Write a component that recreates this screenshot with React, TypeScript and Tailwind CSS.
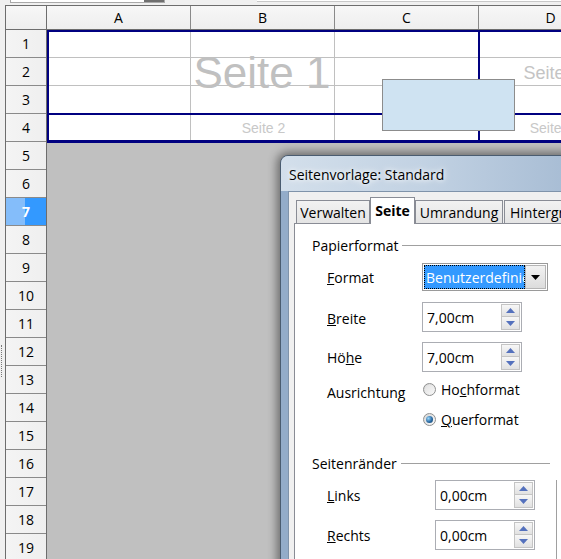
import React from "react";

const NAVY = "border-[#000080]";

function UpTri() {
  return (
    <svg width="9" height="5" viewBox="0 0 9 5">
      <polygon points="0,5 4.5,0 9,5" fill="#5471bd" />
    </svg>
  );
}
function DownTri() {
  return (
    <svg width="9" height="5" viewBox="0 0 9 5">
      <polygon points="0,0 9,0 4.5,5" fill="#5471bd" />
    </svg>
  );
}

function SpinField({ value }: { value: string }) {
  return (
    <div className="w-[100px] h-[30px] border border-[#abadb3] bg-white flex items-center pl-[4px] pr-[1px]">
      <span className="flex-1">{value}</span>
      <div className="flex flex-col w-[19px] h-[26px]">
        <div className="h-[13px] border border-[#c4c4c4] bg-[linear-gradient(to_bottom,#f7f7f7,#e1e1e1)] flex items-center justify-center">
          <UpTri />
        </div>
        <div className="h-[13px] border border-t-0 border-[#c4c4c4] bg-[linear-gradient(to_bottom,#f7f7f7,#e1e1e1)] flex items-center justify-center">
          <DownTri />
        </div>
      </div>
    </div>
  );
}

function Radio({ checked }: { checked?: boolean }) {
  return (
    <div className="w-[13px] h-[13px] rounded-full border border-[#8e8f8f] bg-[linear-gradient(135deg,#d6d6d6,#fbfbfb)] flex items-center justify-center shrink-0">
      {checked ? (
        <div className="w-[7px] h-[7px] rounded-full bg-[radial-gradient(circle_at_35%_35%,#9ad7fb,#2a6aa3_55%,#0f3e66)]" />
      ) : (
        <div className="w-[9px] h-[9px] rounded-full bg-[linear-gradient(135deg,#e2e2e2,#f6f6f6)]" />
      )}
    </div>
  );
}

function PageCells({ rows, cols }: { rows: string; cols: string }) {
  const nRows = rows === "top" ? 3 : 1;
  const nCols = cols === "abc" ? 3 : 1;
  const cells = [];
  for (let r = 0; r < nRows; r++) {
    for (let c = 0; c < nCols; c++) {
      const right = c < nCols - 1 ? "border-r border-[#c0c0c0]" : "";
      const bottom = r < nRows - 1 ? "border-b border-[#c0c0c0]" : "";
      cells.push(<div key={`${r}-${c}`} className={`bg-white ${right} ${bottom}`} />);
    }
  }
  return <>{cells}</>;
}

export default function App() {
  const rows = Array.from({ length: 19 }, (_, i) => i + 1);
  return (
    <div className="relative w-[561px] h-[559px] overflow-hidden bg-[#f0f0f0] font-['Open_Sans',sans-serif] text-[14px] text-black">
      {/* toolbar remnant */}
      <div className="flex items-start h-[5px]">
        <div className="ml-[10px] w-[155px] h-[3px] border-x border-b border-[#a9a9a9] bg-white flex justify-end">
          <div className="w-[20px] h-[2px] bg-[#6f6f6f]" />
        </div>
        <div className="ml-[92px] flex-1 h-[2px] border-b border-[#c8c8c8] bg-white" />
      </div>

      <div className="flex">
        {/* left ruler strip */}
        <div className="w-[5px] shrink-0">
          <div className="mt-[340px] ml-[1px] h-[32px] w-[3px] border-l border-dotted border-[#777]" />
        </div>

        {/* sheet */}
        <div className="flex-1 border-l border-t border-[#6d6d6d] flex flex-col">
          {/* column headers */}
          <div className="flex h-[24px] border-b border-[#6d6d6d] bg-[linear-gradient(to_bottom,#f7f7f7,#eeeeee)]">
            <div className="w-[41px] shrink-0 border-r border-[#6d6d6d]" />
            {["A", "B", "C", "D"].map((c) => (
              <div key={c} className="w-[144px] shrink-0 border-r border-[#8a8a8a] flex items-center justify-center">
                {c}
              </div>
            ))}
          </div>

          <div className="flex">
            {/* row headers */}
            <div className="w-[41px] shrink-0 border-r border-[#6d6d6d] flex flex-col">
              {rows.map((r) =>
                r === 7 ? (
                  <div
                    key={r}
                    className="h-[28px] shrink-0 border-b border-[#8a8a8a] bg-[linear-gradient(to_right,#84bdfa_19px,#3399ff_19px)] text-white font-bold flex items-center justify-center"
                  >
                    {r}
                  </div>
                ) : (
                  <div
                    key={r}
                    className="h-[28px] shrink-0 border-b border-[#8a8a8a] bg-[linear-gradient(to_right,#f4f4f4,#efefef)] flex items-center justify-center"
                  >
                    {r}
                  </div>
                )
              )}
            </div>

            {/* cell area */}
            <div className="relative flex-1 bg-[#c0c0c0]">
              <div className="w-[576px] font-['Liberation_Sans',Arial,sans-serif]">
                <div className={`border-t-2 border-l-2 ${NAVY}`}>
                  <div className={`flex h-[83px] border-b-2 ${NAVY}`}>
                    <div className={`relative w-[431px] shrink-0 border-r-2 ${NAVY} grid grid-cols-[142px_144px_143px] grid-rows-[26px_28px_27px]`}>
                      <PageCells rows="top" cols="abc" />
                      <div className="absolute inset-0 flex items-center justify-center pr-[3px] text-[44px] leading-none text-[#c0c0c0]">
                        Seite 1
                      </div>
                    </div>
                    <div className="relative w-[143px] shrink-0 grid grid-rows-[26px_28px_27px]">
                      <PageCells rows="top" cols="d" />
                      <div className="absolute inset-0 flex items-center justify-center text-[18px] leading-none text-[#c4c4c4]">
                        Seite 3
                      </div>
                    </div>
                  </div>
                  <div className={`flex h-[28px] border-b-[3px] ${NAVY}`}>
                    <div className={`relative w-[431px] shrink-0 border-r-2 ${NAVY} grid grid-cols-[142px_144px_143px]`}>
                      <PageCells rows="bottom" cols="abc" />
                      <div className="absolute inset-0 flex items-center justify-center text-[14px] leading-none text-[#c8c8c8]">
                        Seite 2
                      </div>
                    </div>
                    <div className="relative w-[143px] shrink-0 grid">
                      <PageCells rows="bottom" cols="d" />
                      <div className="absolute inset-0 flex items-center justify-center text-[14px] leading-none text-[#c8c8c8]">
                        Seite 4
                      </div>
                    </div>
                  </div>
                </div>
              </div>
              {/* drawing object */}
              <div className="absolute left-[335px] top-[49px] w-[133px] h-[52px] bg-[#cfe3f2] border border-[#8c8c8c]" />
            </div>
          </div>
        </div>
      </div>

      {/* dialog window */}
      <div className="absolute left-[280px] top-[155px] w-[320px] h-[430px] rounded-t-[8px] border border-[#4a5c70] bg-[#93acc9] shadow-[0_0_10px_3px_rgba(0,0,0,0.45)] flex flex-col">
        <div className="h-[35px] shrink-0 rounded-t-[7px] bg-[linear-gradient(to_right,#d3dfeb,#c2d2e3_45%,#a2b8d1)] pl-[8px] pt-[2px] flex items-center">
          <span className="[text-shadow:0_0_8px_#fff,0_0_4px_#fff]">Seitenvorlage: Standard</span>
        </div>
        <div className="ml-[7px] flex-1 border border-[#7f93aa] bg-[#f0f0f0] flex flex-col">
          {/* tabs */}
          <div className="h-[31px] shrink-0 pt-[5px] pl-[7px] flex items-end">
            <div className="w-[74px] h-[23px] shrink-0 border-t border-x border-[#898c95] bg-[linear-gradient(to_bottom,#f2f2f2,#e4e4e4)] flex items-center justify-center">
              Verwalten
            </div>
            <div className="relative z-10 w-[45px] h-[27px] -mb-px shrink-0 border-t border-x border-[#898c95] bg-white font-bold flex items-center justify-center pb-[1px]">
              Seite
            </div>
            <div className="w-[88px] h-[23px] shrink-0 border-t border-x border-[#898c95] bg-[linear-gradient(to_bottom,#f2f2f2,#e4e4e4)] flex items-center justify-center">
              Umrandung
            </div>
            <div className="ml-px w-[100px] h-[23px] shrink-0 border-t border-x border-[#898c95] bg-[linear-gradient(to_bottom,#f2f2f2,#e4e4e4)] flex items-center pl-[5px] whitespace-nowrap overflow-hidden">
              Hintergrund
            </div>
          </div>

          {/* tab page */}
          <div className="ml-[5px] flex-1 border border-[#898c95] bg-white pl-[17px] pt-[12px]">
            <div className="flex items-center h-[19px] leading-[19px]">
              <span>Papierformat</span>
              <div className="ml-[4px] flex-1 h-px bg-[#a0a0a0]" />
            </div>

            <div className="mt-[8px] pl-[15px] flex items-center h-[28px]">
              <span className="w-[95px] shrink-0">
                <span className="underline">F</span>ormat
              </span>
              <div className="w-[126px] h-[28px] border border-[#9a9a9a] bg-white flex p-px">
                <div className="flex-1 min-w-0 bg-[#3399ff] outline outline-1 outline-dotted outline-black -outline-offset-1 text-white whitespace-nowrap overflow-hidden pl-[2px] flex items-center">
                  Benutzerdefiniert
                </div>
                <div className="w-[21px] shrink-0 border border-[#b5b5b5] bg-[linear-gradient(to_bottom,#f2f2f2,#dcdcdc)] flex items-center justify-center">
                  <svg width="9" height="5" viewBox="0 0 9 5">
                    <polygon points="0,0 9,0 4.5,5" fill="#000" />
                  </svg>
                </div>
              </div>
            </div>

            <div className="mt-[11px] pl-[15px] flex items-center h-[30px]">
              <span className="w-[95px] shrink-0 pt-[2px]">
                <span className="underline">B</span>reite
              </span>
              <SpinField value="7,00cm" />
            </div>

            <div className="mt-[10px] pl-[15px] flex items-center h-[30px]">
              <span className="w-[95px] shrink-0">
                Hö<span className="underline">h</span>e
              </span>
              <SpinField value="7,00cm" />
            </div>

            <div className="mt-[8px] pl-[15px] flex items-start">
              <span className="w-[95px] shrink-0 pt-[3px] leading-[19px]">Ausrichtung</span>
              <div className="flex flex-col pl-px">
                <div className="flex items-center h-[19px] gap-[5px] leading-[19px]">
                  <Radio />
                  <span>
                    Ho<span className="underline">c</span>hformat
                  </span>
                </div>
                <div className="mt-[11px] flex items-center h-[19px] gap-[5px] leading-[19px]">
                  <Radio checked />
                  <span>
                    <span className="underline">Q</span>uerformat
                  </span>
                </div>
              </div>
            </div>

            <div className="mt-[25px] w-[238px] flex items-center h-[19px] leading-[19px]">
              <span>Seitenränder</span>
              <div className="ml-[4px] flex-1 h-px bg-[#a0a0a0]" />
            </div>

            <div className="mt-[7px] flex">
              <div className="w-[244px] shrink-0 flex flex-col">
                <div className="pl-[15px] flex items-center h-[30px]">
                  <span className="w-[108px] shrink-0">
                    <span className="underline">L</span>inks
                  </span>
                  <SpinField value="0,00cm" />
                </div>
                <div className="mt-[10px] pl-[15px] flex items-center h-[30px]">
                  <span className="w-[108px] shrink-0">
                    <span className="underline">R</span>echts
                  </span>
                  <SpinField value="0,00cm" />
                </div>
              </div>
              <div className="h-[100px] border-l border-[#a0a0a0]" />
            </div>
          </div>
        </div>
      </div>
    </div>
  );
}
